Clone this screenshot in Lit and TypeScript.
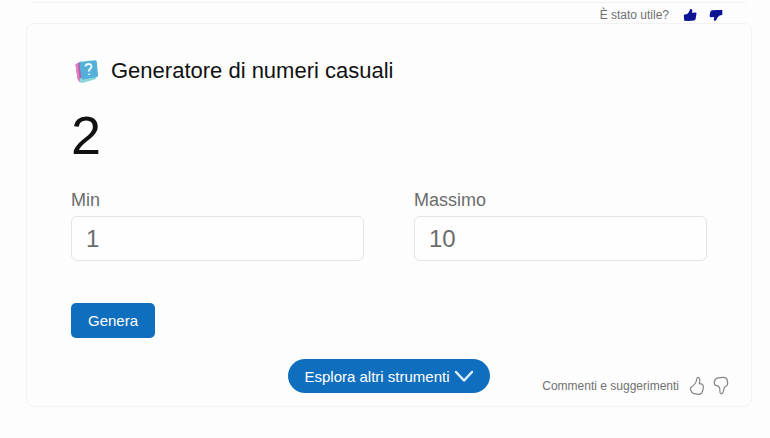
import { LitElement, html, css } from "lit";
import { customElement, state } from "lit/decorators.js";

@customElement("app-root")
export class AppRoot extends LitElement {
  @state() private min = "1";
  @state() private max = "10";
  @state() private result = 2;

  static styles = css`
    :host {
      display: block;
      box-sizing: border-box;
      min-height: 100vh;
      padding: 2px 18px 30px 26px;
      background: #fdfdfd;
      color: #111;
      font-family: "Liberation Sans", Arial, sans-serif;
    }
    *,
    *::before {
      box-sizing: border-box;
    }
    button {
      font: inherit;
      border: 0;
      padding: 0;
      background: none;
      color: inherit;
      cursor: pointer;
    }
    svg {
      display: block;
    }
    .useful {
      display: flex;
      justify-content: flex-end;
      align-items: center;
      height: 21px;
      margin: 0 6px;
      padding: 4px 23px 0 0;
      border-top: 1px solid #f2f2f2;
      font-size: 12px;
      line-height: 16px;
      color: #707070;
    }
    .useful .icon {
      margin-left: 12px;
      color: #0c1494;
    }
    .useful span {
      margin-right: 2px;
    }
    .card {
      border: 1px solid #f2f2f2;
      border-radius: 8px;
      padding: 34px 44px 10px;
    }
    .title {
      display: flex;
      align-items: center;
      gap: 12px;
      margin: 0;
      font-size: 22px;
      line-height: 26px;
      font-weight: 400;
    }
    .result {
      display: block;
      margin-top: 20px;
      font-size: 54px;
      line-height: 62px;
    }
    .fields {
      display: grid;
      grid-template-columns: 1fr 1fr;
      gap: 50px;
      margin-top: 22px;
    }
    .field label {
      display: block;
      font-size: 18px;
      line-height: 24px;
      margin-bottom: 4px;
      color: #6c6c6c;
    }
    .field input {
      display: block;
      width: 100%;
      height: 45px;
      padding: 0 14px;
      border: 1px solid #e4e4e4;
      border-radius: 6px;
      background: #fefefe;
      font-family: inherit;
      font-size: 24px;
      color: #6c6c6c;
      outline: none;
    }
    .generate {
      display: block;
      height: 35px;
      margin-top: 42px;
      padding: 0 17px;
      border-radius: 5px;
      background: #106ebe;
      color: #fff;
      font-size: 15px;
    }
    .footer {
      display: grid;
      grid-template-columns: 1fr auto 1fr;
      align-items: start;
      margin: 21px -22px 0;
    }
    .explore {
      display: flex;
      grid-column: 2;
      align-items: center;
      gap: 4px;
      height: 34px;
      padding: 0 16px;
      border-radius: 17px;
      background: #106ebe;
      color: #fff;
      font-size: 15px;
    }
    .feedback {
      display: flex;
      justify-content: flex-end;
      align-items: center;
      padding-top: 17px;
      font-size: 12px;
      line-height: 16px;
      color: #707070;
      white-space: nowrap;
    }
    .feedback .icon {
      margin-left: 8px;
    }
    .feedback span {
      margin-right: 2px;
    }
  `;

  private generate() {
    const lo = Math.ceil(Number(this.min));
    const hi = Math.floor(Number(this.max));
    this.result = lo + Math.floor(Math.random() * (hi - lo + 1));
  }

  render() {
    return html`
      <div class="useful">
        <span>È stato utile?</span>
        <button class="icon" aria-label="Sì">
          <svg width="14" height="14" viewBox="0 0 14 14" fill="currentColor">
            <path d="M.8 6.800 4.200 6C5.600 4.800 6.600 3.200 7 1.200c1.700-.6 2.700.6 2.300 2L8.800 4.800l3.700-.3c1 .1 1.300 1 .9 1.800l-.8 4.800c-.2.900-.7 1.400-1.600 1.500L5.500 13l-4.300-.3Z" />
          </svg>
        </button>
        <button class="icon" aria-label="No">
          <svg width="14" height="14" viewBox="0 0 14 14" fill="currentColor">
            <path d="M.8 8.500C.5 7 .9 5 1.700 3.300c.3-.7.8-1 1.500-1L9 2l4.300-.1v5.200l-2.700.4C9 8.600 8 10.300 7 12.400c-1 .8-2.300.2-2.200-.9L5.200 9 1.700 9.200C1.200 9.200.9 9 .8 8.500Z" />
          </svg>
        </button>
      </div>
      <main class="card">
        <h1 class="title">
          <svg width="28" height="26" viewBox="0 0 28 26" aria-hidden="true">
            <path d="m4.500 6.500 5-3L11 21l-2 3.500L6.500 21Z" fill="#c24fb0" />
            <path d="m4.500 6.500 2.300-1.300L9 24 6.500 21Z" fill="#dd86b8" />
            <path d="m9 20 17-1.500-1.500 2.800L11 25l-2.500-1Z" fill="#8bd5d8" />
            <path d="M9.500 3.800 24 2.200c1 0 1.600.5 1.700 1.400L27 17c.1 1-.4 1.700-1.400 1.900L12 21.500c-1 .1-1.700-.4-1.800-1.400L8.300 5.200c-.1-.8.300-1.300 1.200-1.400Z" fill="#54b0d9" />
            <path d="M14.500 8.300c.3-3 6-3.400 6 .1 0 2.500-2.900 2.300-2.700 5.100m.2 2.200.1 1.300" fill="none" stroke="#e8fbff" stroke-width="2" />
          </svg>
          Generatore di numeri casuali
        </h1>
        <output class="result">${this.result}</output>
        <div class="fields">
          <div class="field">
            <label for="min">Min</label>
            <input id="min" inputmode="numeric" .value=${this.min}
              @input=${(e: Event) => (this.min = (e.target as HTMLInputElement).value)} />
          </div>
          <div class="field">
            <label for="max">Massimo</label>
            <input id="max" inputmode="numeric" .value=${this.max}
              @input=${(e: Event) => (this.max = (e.target as HTMLInputElement).value)} />
          </div>
        </div>
        <button class="generate" @click=${this.generate}>Genera</button>
        <div class="footer">
          <button class="explore">
            Esplora altri strumenti
            <svg width="20" height="14" viewBox="0 0 20 14" fill="none" stroke="#def0ff" stroke-width="2.500" stroke-linecap="round" stroke-linejoin="round">
              <path d="m2 3 8 8.500L18 3" />
            </svg>
          </button>
          <div class="feedback">
            <span>Commenti e suggerimenti</span>
            <button class="icon" aria-label="Mi piace">
              <svg width="16" height="20" viewBox="0 0 16 20" fill="none" stroke="#858585" stroke-width="1.200" stroke-linejoin="round">
                <path d="M1.500 13.500c-.3-1 0-1.800.9-2.400C5 9.400 7 7.200 7.700 3.500 8 1.700 8.700 1 9.600 1.500c1.700 1 1.400 3.500.7 6.200 2.700.1 4.200.9 4.100 3-.1 2.300-.6 4-1.500 5.900-.8 1.500-2.200 2-4 1.700l-4.400-1C2.700 16.800 2 15.300 1.500 13.500Z" />
              </svg>
            </button>
            <button class="icon" aria-label="Non mi piace">
              <svg width="16" height="20" viewBox="0 0 16 20" fill="none" stroke="#858585" stroke-width="1.200" stroke-linejoin="round">
                <path d="M1.300 7.200c0-1.500.4-3.100 1.300-4.200.7-.9 1.600-1 2.700-1.200l5.200-.5c1.900-.1 3 .6 3.600 2.400.5 1.600.8 3 .5 4.600-.3 1.400-1.300 1.700-2.300 2.300-1.500 1-1.300 2.400-1.800 4.200-.5 1.900-1.500 3.200-2.600 2.900-1.400-.4-1-2.300-1-3.700 0-1.600-.6-3-1.700-4-1.400-.6-3.900-.2-3.900-2.800Z" />
              </svg>
            </button>
          </div>
        </div>
      </main>
    `;
  }
}
